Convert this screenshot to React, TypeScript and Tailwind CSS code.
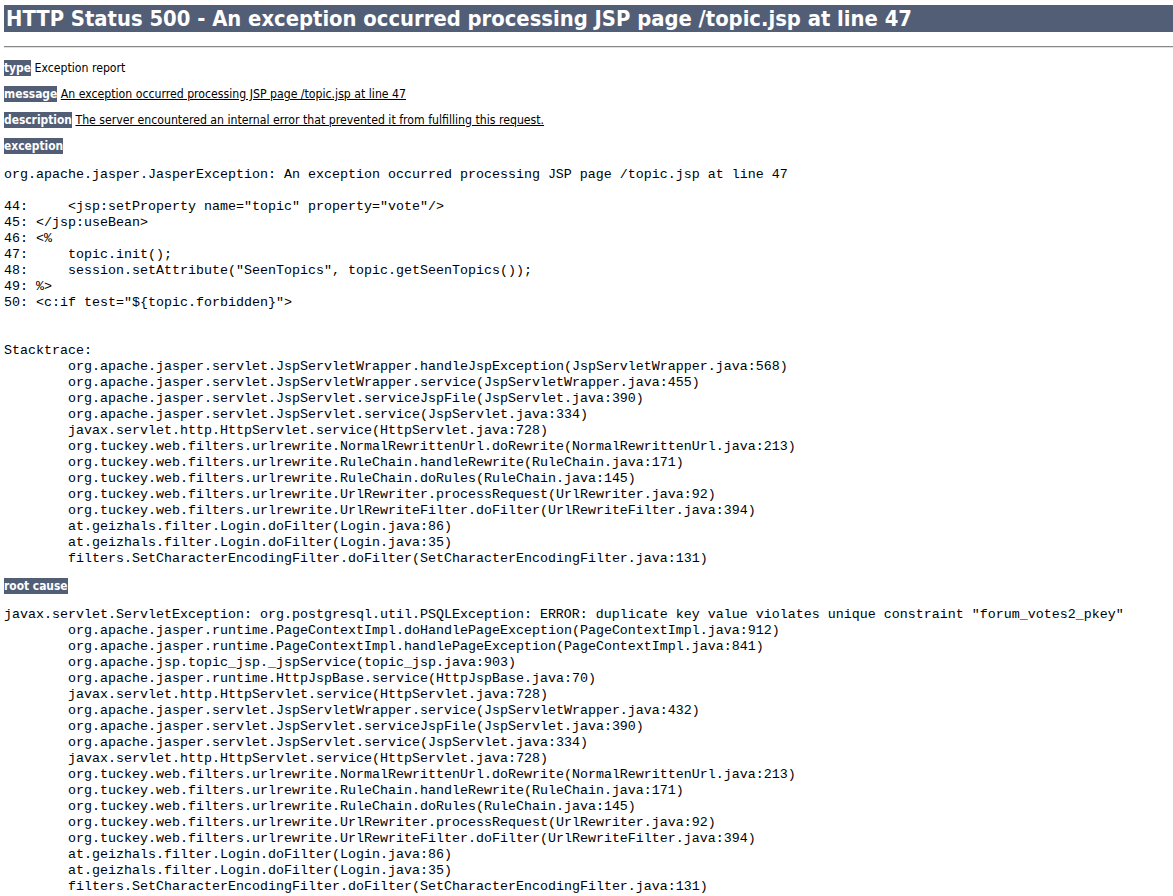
import React from "react";

const sans = "font-['DejaVu_Sans_Condensed','DejaVu_Sans',sans-serif]";
const mono = "font-['Liberation_Mono','Courier_New',monospace]";

const pre1 = `org.apache.jasper.JasperException: An exception occurred processing JSP page /topic.jsp at line 47

44:     <jsp:setProperty name="topic" property="vote"/>
45: </jsp:useBean>
46: <%
47:     topic.init();
48:     session.setAttribute("SeenTopics", topic.getSeenTopics());
49: %>
50: <c:if test="\${topic.forbidden}">


Stacktrace:
\torg.apache.jasper.servlet.JspServletWrapper.handleJspException(JspServletWrapper.java:568)
\torg.apache.jasper.servlet.JspServletWrapper.service(JspServletWrapper.java:455)
\torg.apache.jasper.servlet.JspServlet.serviceJspFile(JspServlet.java:390)
\torg.apache.jasper.servlet.JspServlet.service(JspServlet.java:334)
\tjavax.servlet.http.HttpServlet.service(HttpServlet.java:728)
\torg.tuckey.web.filters.urlrewrite.NormalRewrittenUrl.doRewrite(NormalRewrittenUrl.java:213)
\torg.tuckey.web.filters.urlrewrite.RuleChain.handleRewrite(RuleChain.java:171)
\torg.tuckey.web.filters.urlrewrite.RuleChain.doRules(RuleChain.java:145)
\torg.tuckey.web.filters.urlrewrite.UrlRewriter.processRequest(UrlRewriter.java:92)
\torg.tuckey.web.filters.urlrewrite.UrlRewriteFilter.doFilter(UrlRewriteFilter.java:394)
\tat.geizhals.filter.Login.doFilter(Login.java:86)
\tat.geizhals.filter.Login.doFilter(Login.java:35)
\tfilters.SetCharacterEncodingFilter.doFilter(SetCharacterEncodingFilter.java:131)`;

const pre2 = `javax.servlet.ServletException: org.postgresql.util.PSQLException: ERROR: duplicate key value violates unique constraint "forum_votes2_pkey"
\torg.apache.jasper.runtime.PageContextImpl.doHandlePageException(PageContextImpl.java:912)
\torg.apache.jasper.runtime.PageContextImpl.handlePageException(PageContextImpl.java:841)
\torg.apache.jsp.topic_jsp._jspService(topic_jsp.java:903)
\torg.apache.jasper.runtime.HttpJspBase.service(HttpJspBase.java:70)
\tjavax.servlet.http.HttpServlet.service(HttpServlet.java:728)
\torg.apache.jasper.servlet.JspServletWrapper.service(JspServletWrapper.java:432)
\torg.apache.jasper.servlet.JspServlet.serviceJspFile(JspServlet.java:390)
\torg.apache.jasper.servlet.JspServlet.service(JspServlet.java:334)
\tjavax.servlet.http.HttpServlet.service(HttpServlet.java:728)
\torg.tuckey.web.filters.urlrewrite.NormalRewrittenUrl.doRewrite(NormalRewrittenUrl.java:213)
\torg.tuckey.web.filters.urlrewrite.RuleChain.handleRewrite(RuleChain.java:171)
\torg.tuckey.web.filters.urlrewrite.RuleChain.doRules(RuleChain.java:145)
\torg.tuckey.web.filters.urlrewrite.UrlRewriter.processRequest(UrlRewriter.java:92)
\torg.tuckey.web.filters.urlrewrite.UrlRewriteFilter.doFilter(UrlRewriteFilter.java:394)
\tat.geizhals.filter.Login.doFilter(Login.java:86)
\tat.geizhals.filter.Login.doFilter(Login.java:35)
\tfilters.SetCharacterEncodingFilter.doFilter(SetCharacterEncodingFilter.java:131)`;

function Label({ children }: { children: React.ReactNode }) {
  return <b className="bg-[#525D76] text-white font-bold text-[11.9px] py-[1px]">{children}</b>;
}

export default function App() {
  return (
    <div className={`bg-white min-h-screen pl-[4px] pt-[5px] text-black ${sans} text-[12.2px] overflow-hidden`}>
      <h1 className="bg-[#525D76] text-white font-bold text-[21.8px] leading-[27px] h-[27px] pl-[2px] whitespace-nowrap">
        HTTP Status 500 - An exception occurred processing JSP page /topic.jsp at line 47
      </h1>
      <div className="mt-[14px] h-[2px] border-t border-t-[#888888] border-b border-b-[#e0e0e0]" />
      <div className="mt-[13px] flex flex-col gap-[12px] leading-[14px]">
        <p className="h-[14px]"><Label>type</Label> Exception report</p>
        <p className="h-[14px]"><Label>message</Label> <u>An exception occurred processing JSP page /topic.jsp at line 47</u></p>
        <p className="h-[14px]"><Label>description</Label> <u>The server encountered an internal error that prevented it from fulfilling this request.</u></p>
        <p className="h-[14px]"><Label>exception</Label></p>
      </div>
      <pre className={`mt-[14px] ${mono} text-[13.333px] leading-[16px] whitespace-pre [tab-size:8]`}>{pre1}</pre>
      <p className="mt-[12px] h-[14px] leading-[14px]"><Label>root cause</Label></p>
      <pre className={`mt-[14px] ${mono} text-[13.333px] leading-[16px] whitespace-pre [tab-size:8]`}>{pre2}</pre>
    </div>
  );
}
